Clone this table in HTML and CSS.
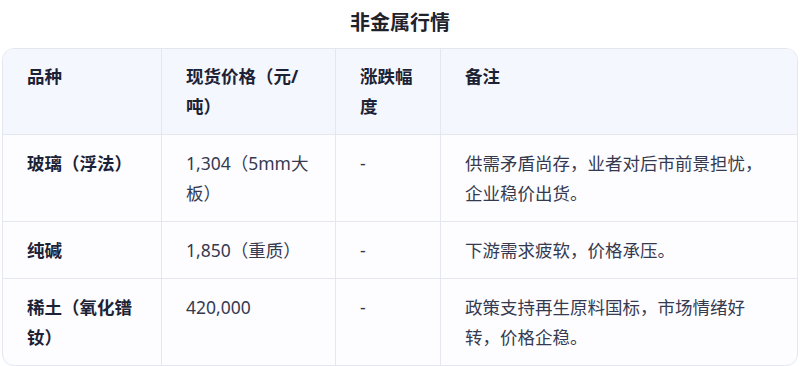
FILE: index.html
```html
<!DOCTYPE html>
<html lang="zh-CN">
<head>
<meta charset="utf-8">
<title>非金属行情</title>
<link rel="stylesheet" href="styles.css">
</head>
<body>
<h2 class="title">非金属行情</h2>
<div class="table-wrap">
  <table class="quote-table">
    <thead>
      <tr>
        <th class="c1">品种</th>
        <th class="c2">现货价格（元/吨）</th>
        <th class="c3">涨跌幅度</th>
        <th class="c4">备注</th>
      </tr>
    </thead>
    <tbody>
      <tr>
        <td class="name">玻璃（浮法）</td>
        <td>1,304（5mm大板）</td>
        <td>-</td>
        <td class="last">供需矛盾尚存，业者对后市前景担忧，企业稳价出货。</td>
      </tr>
      <tr>
        <td class="name">纯碱</td>
        <td>1,850（重质）</td>
        <td>-</td>
        <td class="last">下游需求疲软，价格承压。</td>
      </tr>
      <tr class="end">
        <td class="name">稀土（氧化镨钕）</td>
        <td>420,000</td>
        <td>-</td>
        <td class="last">政策支持再生原料国标，市场情绪好转，价格企稳。</td>
      </tr>
    </tbody>
  </table>
</div>
</body>
</html>
```

FILE: styles.css
```css
html, body {
  margin: 0;
  padding: 0;
  background: #ffffff;
}
body {
  font-family: "Noto Sans", "Noto Sans CJK SC", sans-serif;
  color: #363a50;
}
.title {
  margin: 9px 0 11px;
  font-size: 20px;
  line-height: 28px;
  font-weight: 700;
  text-align: center;
  color: #1f2329;
}
.table-wrap {
  margin: 0 2px;
  border: 1px solid #e4e7ef;
  border-radius: 12px;
  overflow: hidden;
  background: #fdfdff;
}
.quote-table {
  width: 100%;
  table-layout: fixed;
  border-collapse: separate;
  border-spacing: 0;
  font-size: 17.5px;
  line-height: 30px;
}
.quote-table th,
.quote-table td {
  box-sizing: border-box;
  padding: 13px 24px;
  text-align: left;
  vertical-align: top;
  border-right: 1px solid #e4e7ef;
  border-bottom: 1px solid #e4e7ef;
}
.quote-table th {
  padding-top: 12px;
  background: #f4f7fd;
  font-weight: 700;
  color: #1c2235;
}
.quote-table .c1 { width: 159px; }
.quote-table .c2 { width: 174px; }
.quote-table .c3 { width: 105px; }
.quote-table .c4 { width: 356px; }
.quote-table th.c4,
.quote-table td.last {
  border-right: none;
}
.quote-table tr.end td {
  border-bottom: none;
}
.quote-table td.name {
  font-weight: 700;
  color: #1c2235;
}
```
